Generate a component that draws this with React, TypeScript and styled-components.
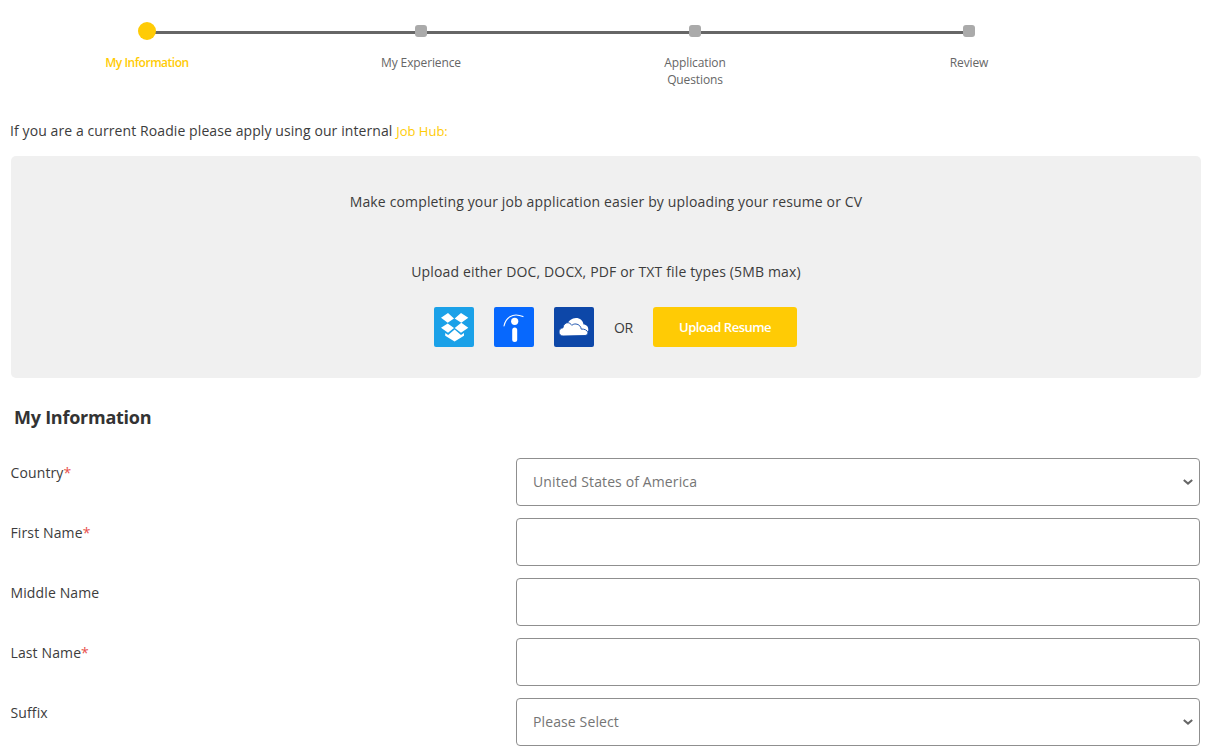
import styled, { createGlobalStyle } from 'styled-components';

const GlobalStyle = createGlobalStyle`
  html, body {
    margin: 0;
    padding: 0;
    background: #fff;
    overflow: hidden;
  }
  body {
    font-family: 'Open Sans', 'Liberation Sans', sans-serif;
    color: #3c3c3c;
  }
`
const Page = styled.div`
  width: 1218px;
  height: 748px;
  box-sizing: border-box;
  padding: 0 17px 0 11px;
  overflow: hidden;
`
const Stepper = styled.div`
  display: grid;
  grid-template-columns: repeat(4, 274px);
  padding-top: 21px;
  margin-left: -1px;
  height: 113px;
  box-sizing: border-box;
`
const Step = styled.div`
  position: relative;
  display: flex;
  flex-direction: column;
  align-items: center;

  &:not(:last-child)::after {
    content: '';
    position: absolute;
    top: 10px;
    left: 50%;
    width: 100%;
    height: 3px;
    background: #666;
  }
`
const Marker = styled.div<{ $active?: boolean }>`
  position: relative;
  z-index: 1;
  box-sizing: border-box;
  width: ${p => (p.$active ? '18px' : '12px')};
  height: ${p => (p.$active ? '18px' : '12px')};
  margin: ${p => (p.$active ? '1px 0 0' : '4px 0 3px')};
  border-radius: ${p => (p.$active ? '50%' : '3px')};
  background: ${p => (p.$active ? '#ffcb05' : '#aaa')};
`
const StepLabel = styled.div<{ $active?: boolean }>`
  margin-top: 14px;
  width: 110px;
  text-align: center;
  font-size: 12px;
  line-height: 17px;
  letter-spacing: ${p => (p.$active ? '-0.48px' : '-0.12px')};
  color: ${p => (p.$active ? '#ffcb05' : '#666')};
  font-weight: ${p => (p.$active ? 600 : 400)};
`
const Notice = styled.p`
  margin: 0 0 0 -1px;
  height: 43px;
  padding-top: 8px;
  box-sizing: border-box;
  font-size: 14px;
  line-height: 20px;
  letter-spacing: 0.09px;
  color: #3c3c3c;
`
const HubLink = styled.a`
  color: #ffcb05;
  font-size: 13px;
  letter-spacing: 0;
`
const UploadPanel = styled.section`
  height: 222px;
  box-sizing: border-box;
  padding-top: 36px;
  background: #f0f0f0;
  border-radius: 5px;
  display: flex;
  flex-direction: column;
  align-items: center;
`
const PanelText = styled.p`
  margin: 0 0 50px;
  font-size: 14px;
  line-height: 20px;
  letter-spacing: 0.15px;
  color: #3c3c3c;
`
const UploadRow = styled.div`
  margin: -25px 0 0 19px;
  display: flex;
  align-items: center;
`
const ProviderIcon = styled.a<{ $bg: string }>`
  display: block;
  width: 40px;
  height: 40px;
  margin-right: 20px;
  border-radius: 2px;
  background: ${p => p.$bg};

  svg {
    display: block;
  }
`
const OrText = styled.span`
  font-size: 14px;
  letter-spacing: -0.2px;
  margin-right: 20px;
  color: #3c3c3c;
`
const UploadButton = styled.button`
  width: 144px;
  height: 40px;
  border: none;
  border-radius: 3px;
  background: #ffcb05;
  color: #fff;
  font-family: inherit;
  font-size: 13px;
  font-weight: 600;
  letter-spacing: -0.5px;
`
const SectionTitle = styled.h2`
  margin: 0;
  padding: 26px 0 0 3px;
  height: 80px;
  box-sizing: border-box;
  font-size: 18px;
  line-height: 26px;
  font-weight: 700;
  letter-spacing: -0.25px;
  color: #333;
`
const Fields = styled.div`
  display: flex;
  flex-direction: column;
  gap: 12px;
`
const Row = styled.div`
  display: grid;
  grid-template-columns: 505px 684px;
`
const Label = styled.label`
  margin-left: -0.5px;
  padding-top: 5px;
  font-size: 14px;
  line-height: 20px;
  letter-spacing: 0.12px;
  color: #3c3c3c;
`
const Required = styled.span`
  color: #e8504d;
`
const Control = styled.div`
  position: relative;
`
const TextInput = styled.input`
  display: block;
  width: 100%;
  height: 48px;
  box-sizing: border-box;
  border: 1px solid #8f8f8f;
  border-radius: 4px;
  background: #fff;
`
const SelectBox = styled.select`
  display: block;
  width: 100%;
  height: 48px;
  box-sizing: border-box;
  padding: 0 30px 2px 16px;
  border: 1px solid #8f8f8f;
  border-radius: 4px;
  background: #fff;
  appearance: none;
  font-family: inherit;
  font-size: 14px;
  letter-spacing: 0.12px;
  color: #757575;
`
const Chevron = styled.svg`
  position: absolute;
  right: 7px;
  top: 21px;
  pointer-events: none;
`

const steps = [
  { label: 'My Information', active: true },
  { label: 'My Experience' },
  { label: 'Application Questions' },
  { label: 'Review' },
];

const fields = [
  { label: 'Country', required: true, select: 'United States of America' },
  { label: 'First Name', required: true },
  { label: 'Middle Name' },
  { label: 'Last Name', required: true },
  { label: 'Suffix', select: 'Please Select' },
];

function App() {
  return (
    <Page>
      <GlobalStyle />
      <Stepper>
        {steps.map(step => (
          <Step key={step.label}>
            <Marker $active={step.active} />
            <StepLabel $active={step.active}>{step.label}</StepLabel>
          </Step>
        ))}
      </Stepper>

      <Notice>
        If you are a current Roadie please apply using our internal <HubLink>Job Hub:</HubLink>
      </Notice>

      <UploadPanel>
        <PanelText>Make completing your job application easier by uploading your resume or CV</PanelText>
        <PanelText>Upload either DOC, DOCX, PDF or TXT file types (5MB max)</PanelText>
        <UploadRow>
          <ProviderIcon $bg="#1ba1e8">
            <svg width="40" height="40" viewBox="0 0 40 40" fill="#fff">
              <path d="M14 6 7 10.8l6.7 5 6.3-4.4zM27 6l-6.3 5.4 6.6 4.4 7-5z" />
              <path d="M7 20.8l7 5 6-4.8-6.3-4.4zM34.3 20.8l-7-5-6.6 5.2 6.3 4.8z" />
              <path d="M20.6 22.6 14.2 28l-3-1.9v2.6l9.4 5.8 9.4-5.8v-2.6l-3 1.9z" />
            </svg>
          </ProviderIcon>
          <ProviderIcon $bg="#0768fd">
            <svg width="40" height="40" viewBox="0 0 40 40" fill="none">
              <path d="M10 19C11.5 11.5 18 5 29 9.6" stroke="#fff" strokeWidth="1.1" strokeLinecap="round" />
              <circle cx="20.7" cy="14.3" r="3.6" fill="#fff" />
              <rect x="18.2" y="20.4" width="5" height="14.6" rx="2.5" fill="#fff" />
            </svg>
          </ProviderIcon>
          <ProviderIcon $bg="#0d47a8">
            <svg width="40" height="40" viewBox="0 0 40 40" fill="#fff">
              <path d="M13 18C14 14 18 11 22 11c4 0 7 2.5 7.5 6.5 3 0 5 2.3 4.8 5.5-.1 1.5-.8 3-2.3 4L20 24z" />
              <path d="M9 29c-2.5 0-4-2-4-4 0-2.3 1.7-4 4-4.2.2-3 2.5-5.3 5-5.1 1.6.1 3 1.4 3.8 2.6 1.2-1 2.6-1.5 4.2-1.3 3 .3 5 2.5 5.2 5.1 2.8-.3 6.3.9 6.6 3.4.2 1.8-1.2 3-2.8 3z" stroke="#0d47a8" strokeWidth="0.9" />
            </svg>
          </ProviderIcon>
          <OrText>OR</OrText>
          <UploadButton>Upload Resume</UploadButton>
        </UploadRow>
      </UploadPanel>

      <SectionTitle>My Information</SectionTitle>

      <Fields>
        {fields.map(field => (
          <Row key={field.label}>
            <Label>
              {field.label}
              {field.required && <Required>*</Required>}
            </Label>
            <Control>
              {field.select ? (
                <>
                  <SelectBox defaultValue={field.select}>
                    <option>{field.select}</option>
                  </SelectBox>
                  <Chevron width="10" height="6" viewBox="0 0 10 6" fill="none">
                    <path d="M.8 1l4.2 3.6L9.2 1" stroke="#666" strokeWidth="2" />
                  </Chevron>
                </>
              ) : (
                <TextInput type="text" />
              )}
            </Control>
          </Row>
        ))}
      </Fields>
    </Page>
  )
}

export default App;
